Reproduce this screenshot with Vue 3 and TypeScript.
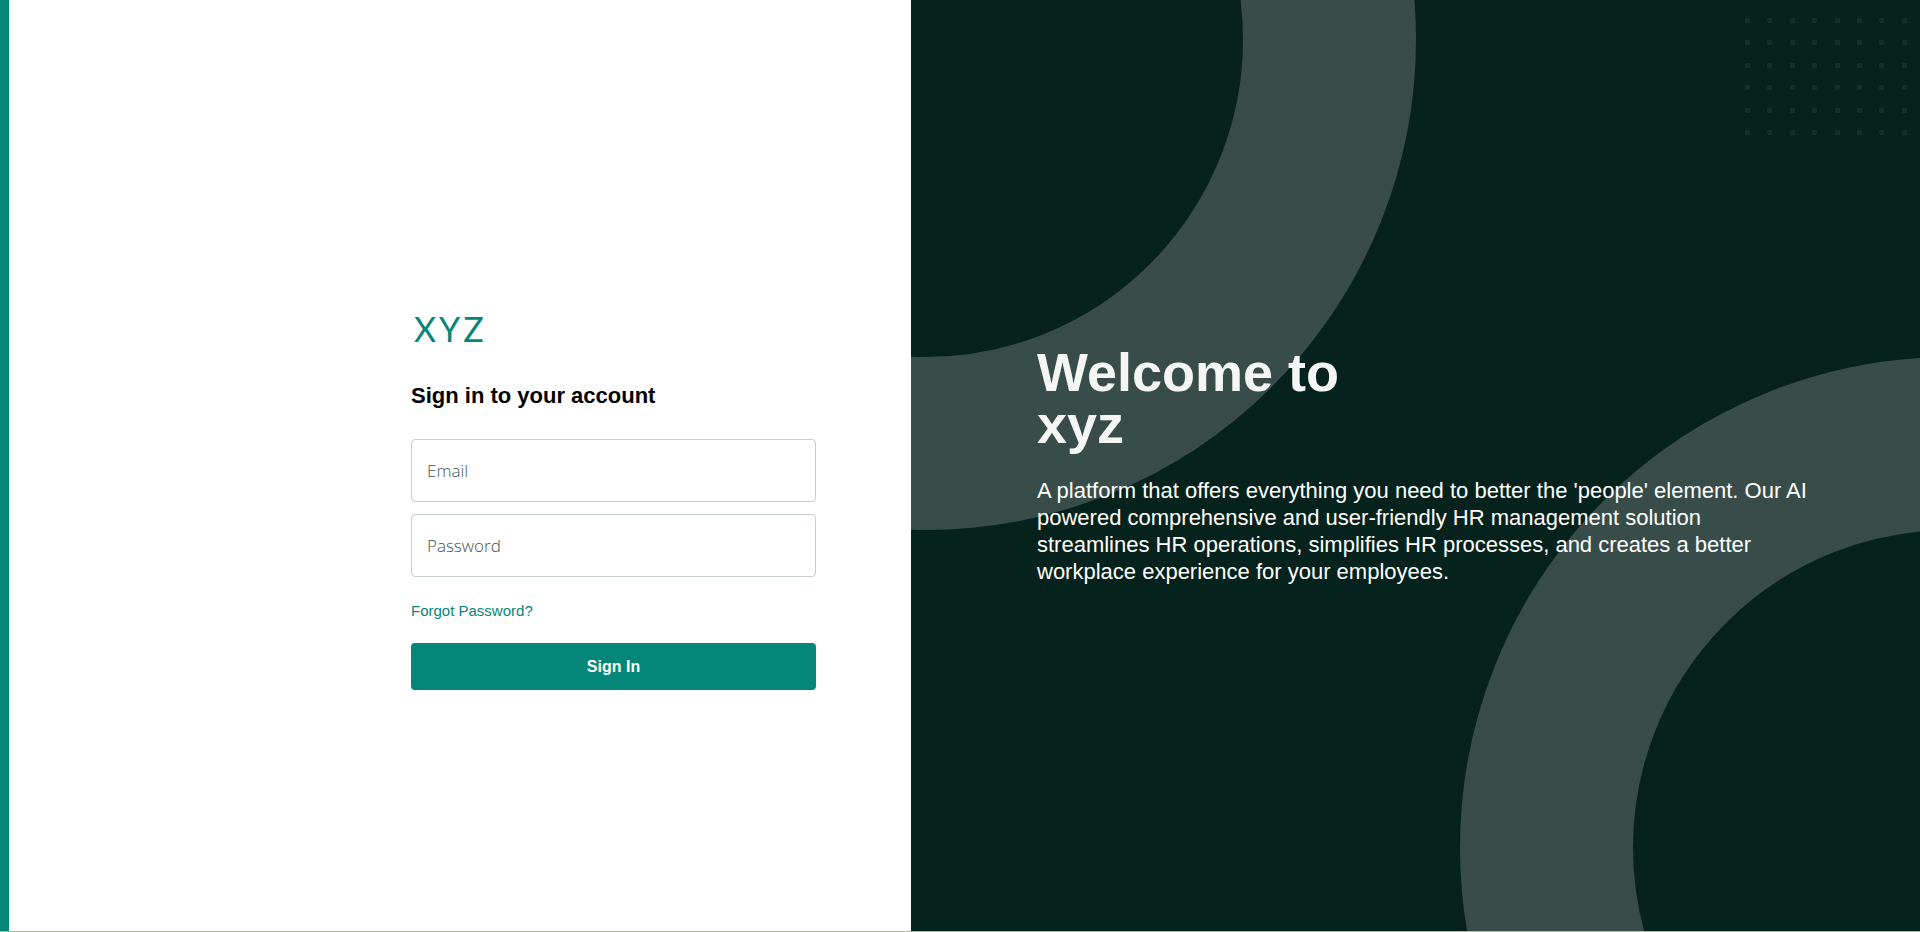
<script setup lang="ts">
import { ref } from 'vue'

const email = ref('')
const password = ref('')

const pitch = 22.4
const dots = Array.from({ length: 48 }, (_, i) => ({
  id: i,
  x: Math.round((i % 8) * pitch),
  y: Math.round(Math.floor(i / 8) * pitch),
}))
</script>

<template>
  <div class="page">
    <main class="signin">
      <form class="form" @submit.prevent>
        <div class="logo">XYZ</div>
        <h2 class="heading">Sign in to your account</h2>
        <input v-model="email" class="field" type="email" placeholder="Email" aria-label="Email" />
        <input v-model="password" class="field" type="password" placeholder="Password" aria-label="Password" />
        <a class="forgot" href="#">Forgot Password?</a>
        <button class="submit" type="submit">Sign In</button>
      </form>
    </main>
    <section class="hero">
      <div class="ring ring-top"></div>
      <div class="ring ring-bottom"></div>
      <svg class="dots" width="163" height="118" viewBox="0 0 163 118" aria-hidden="true">
        <rect v-for="d in dots" :key="d.id" :x="d.x" :y="d.y" width="5" height="5" rx="1" />
      </svg>
      <div class="copy">
        <h1 class="title">Welcome to<br />xyz</h1>
        <p class="text">
          A platform that offers everything you need to better the 'people' element. Our AI powered
          comprehensive and user-friendly HR management solution streamlines HR operations,
          simplifies HR processes, and creates a better workplace experience for your employees.
        </p>
      </div>
    </section>
  </div>
</template>

<style>
body {
  margin: 0;
  background: #fff;
}
</style>

<style scoped>
.page {
  box-sizing: border-box;
  min-height: 100vh;
  display: grid;
  grid-template-columns: 911fr 1009fr;
  border-bottom: 1px solid #b5b896;
  font-family: "Liberation Sans", Arial, sans-serif;
}
.signin {
  display: flex;
  align-items: center;
  justify-content: flex-end;
  padding-right: 95px;
  border-left: 9px solid #048678;
}
.form {
  width: 405px;
  display: flex;
  flex-direction: column;
}
.logo {
  padding: 64px 0 28px 3px;
  font-family: Lato, "Noto Sans", sans-serif;
  font-size: 34px;
  line-height: 48px;
  letter-spacing: 3px;
  color: #048678;
}
.heading {
  margin: 0 0 28px;
  font-size: 22px;
  line-height: 30px;
  font-weight: 700;
  color: #000;
}
.field {
  box-sizing: border-box;
  width: 100%;
  height: 63px;
  margin: 0 0 12px;
  padding: 0 15px;
  border: 1px solid #c6cfcd;
  border-radius: 4px;
  outline: none;
  background: #fff;
  font-family: "Open Sans", "Noto Sans", sans-serif;
  font-size: 17px;
  font-weight: 300;
  color: #06221d;
}
.field::placeholder {
  color: #3f5450;
  opacity: 1;
}
.forgot {
  align-self: flex-start;
  margin: 12px 0 22px;
  font-size: 15px;
  line-height: 20px;
  color: #048678;
  text-decoration: none;
}
.submit {
  height: 47px;
  padding: 0;
  border: 0;
  border-radius: 4px;
  background: #048678;
  font-family: inherit;
  font-size: 16px;
  font-weight: 700;
  color: #fff;
  cursor: pointer;
}
.hero {
  position: relative;
  overflow: hidden;
  display: flex;
  align-items: center;
  padding: 0 111px 0 126px;
  background: #06221d;
}
.ring {
  position: absolute;
  box-sizing: border-box;
  width: 981px;
  height: 981px;
  border: 173px solid #384d49;
  border-radius: 50%;
}
.ring-top {
  left: -476px;
  top: -451px;
}
.ring-bottom {
  right: -521px;
  bottom: -407px;
}
.dots {
  position: absolute;
  top: 18px;
  right: 12px;
  fill: #162e2d;
}
.copy {
  position: relative;
  padding-bottom: 1px;
}
.title {
  margin: 0 0 27px;
  font-size: 54px;
  line-height: 52px;
  font-weight: 700;
  color: #f5f5f3;
}
.text {
  margin: 0;
  font-size: 22px;
  line-height: 27px;
  color: #fff;
}
</style>
